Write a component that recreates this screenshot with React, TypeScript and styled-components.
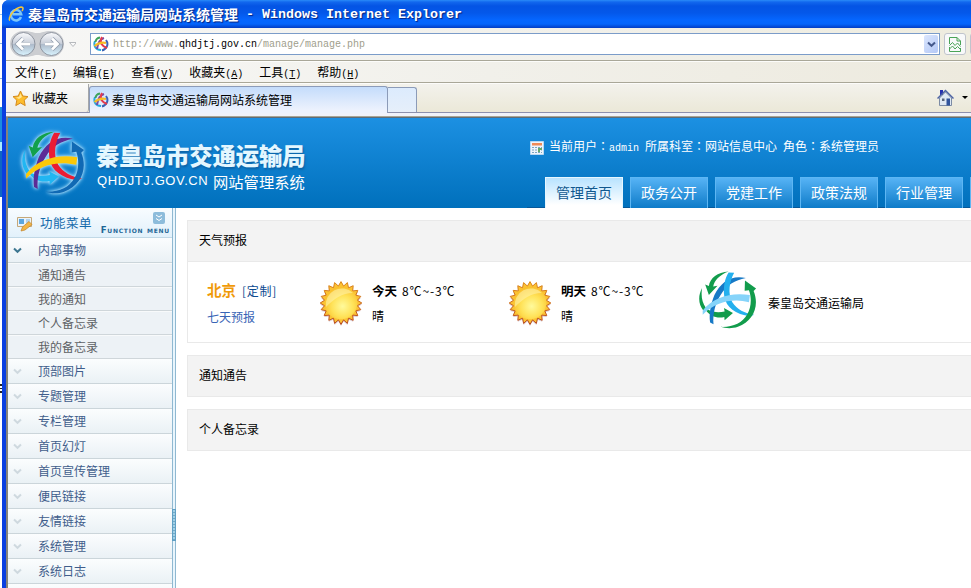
import React from "react";
import styled, { createGlobalStyle } from "styled-components";

const cjk = `"Noto Sans CJK SC", sans-serif`;
const mono = `"Liberation Mono", "Noto Sans CJK SC", monospace`;

const GlobalStyle = createGlobalStyle`
  * { box-sizing: border-box; }
  html, body { margin: 0; padding: 0; overflow: hidden; }
  body { font: 12px/16px ${cjk}; color: #000; background: #fff; }
  svg { display: block; flex: none; }
`;

const Screen = styled.div`
  display: grid;
  grid-template-columns: 2px 969px;
  width: 971px;
  height: 588px;
  overflow: hidden;
`;
const Desktop = styled.div`
  background: linear-gradient(#fff 0 14px, #9cc4e8 14px 15px, #fff 15px 43px, #8fb5dd 43px 44px, #fff 44px 78px,
    #8fb5dd 78px 79px, #fff 79px 107px, #1b8be0 107px 142px, #a8ecff 142px 151px, #0f66c4 151px 197px,
    #fff 197px 229px, #8fb5dd 229px 230px, #fff 230px 384px, #222 384px 386px, #fff 386px 388px,
    #222 388px 389px, #fff 389px 391px, #222 391px 393px, #fff 393px);
`;
const Window = styled.div`
  display: flex;
  flex-direction: column;
  height: 588px;
  background: #0a3fe0;
  border-top-left-radius: 7px;
  overflow: hidden;
`;
const TitleBar = styled.div`
  display: flex;
  align-items: center;
  flex: none;
  height: 28px;
  padding: 0 0 0 6px;
  color: #fff;
  font-weight: 700;
  text-shadow: 1px 1px 1px #06227d;
  background: linear-gradient(#2a8bf8 0, #1268ee 2px, #0454e4 6px, #0458ea 13px, #0566ff 20px, #0565fb 24px, #0347d2 27px, #033dc4 28px);
`;
const TitleCjk = styled.span`
  margin-left: 4px;
  font: 700 14px/20px ${cjk};
  width: 210px;
  white-space: nowrap;
`;
const TitleLatin = styled.span`
  font: 700 13.33px/20px "Liberation Mono", monospace;
  padding-top: 2px;
  white-space: pre;
`;
const Frame = styled.div`
  flex: 1;
  min-height: 0;
  display: flex;
  flex-direction: column;
  border-left: 4px solid #0a3fe0;
  background: #f1efe4;
`;
const AddressRow = styled.div`
  display: flex;
  flex: none;
  height: 33px;
  padding: 2px 0 0 4px;
  background: linear-gradient(90deg, #f7f7f6, #f1f0ea 60%, #eeecdf);
  border-bottom: 1px solid #a9a798;
`;
const UrlBox = styled.div`
  display: flex;
  align-items: center;
  flex: none;
  margin: 3px 0 0 14px;
  width: 850px;
  height: 22px;
  padding: 0 1px 0 2px;
  background: #fff;
  border: 1px solid #7b9cc9;
`;
const Url = styled.span`
  flex: 1;
  margin-left: 4px;
  padding-top: 1px;
  color: #a09e8c;
  font: 10px/16px ${mono};
  b { font-weight: 400; color: #000; }
`;
const DropButton = styled.span`
  display: grid;
  place-items: center;
  width: 14px;
  height: 18px;
  border-radius: 2px;
  background: linear-gradient(135deg, #dbe6fd, #b3c8f6);
`;
const ToolButton = styled.span`
  display: grid;
  place-items: center;
  flex: none;
  width: 22px;
  height: 22px;
  margin: 3px 0 0 4px;
  border: 1px solid #c0c4cc;
  border-radius: 3px;
  background: #f8f9fa;
`;
const MenuBar = styled.div`
  display: flex;
  flex: none;
  gap: 16px;
  height: 22px;
  padding: 2px 0 0 9px;
  background: linear-gradient(90deg, #f8f8f7, #f1f0ea 50%, #edeade);
  border-top: 1px solid #fcfcfa;
  border-bottom: 1px solid #a9a798;
`;
const MenuItem = styled.span`
  white-space: nowrap;
  i { font: 10px/14px ${mono}; }
`;
const TabBar = styled.div`
  display: flex;
  align-items: flex-end;
  flex: none;
  height: 30px;
  border-top: 1px solid #fcfcfa;
  border-bottom: 1px solid #8c90ad;
  background: linear-gradient(#f3f2ec, #ebe8d8);
`;
const Favorites = styled.div`
  display: flex;
  align-items: center;
  gap: 3px;
  width: 83px;
  height: 28px;
  padding: 0 0 0 6px;
  background: linear-gradient(#fbfbfa, #eeede6);
  border-right: 1px solid #a5a7a9;
  border-bottom-right-radius: 3px;
  align-self: stretch;
`;
const BrowserTab = styled.div`
  display: flex;
  align-items: center;
  gap: 3px;
  width: 299px;
  height: 27px;
  margin-bottom: -1px;
  padding: 0 0 0 3px;
  border: 1px solid #8c9bb8;
  border-bottom: 0;
  border-radius: 3px 3px 0 0;
  background: linear-gradient(#c4dcfb, #edf2fd 90%);
`;
const NewTab = styled.div`
  width: 29px;
  height: 25px;
  border: 1px solid #8c9bb8;
  border-left: 0;
  border-bottom: 0;
  border-radius: 0 3px 0 0;
  background: linear-gradient(#dcebfd, #e6effa);
`;
const HomeTools = styled.div`
  display: flex;
  align-items: center;
  gap: 8px;
  height: 28px;
  margin-left: auto;
  padding-right: 3px;
`;
const Strip = styled.div`
  flex: none;
  height: 4px;
  background: #f0f2fa;
  border-bottom: 1px solid #aaa593;
`;
const Page = styled.div`
  flex: 1;
  min-height: 0;
  display: flex;
  flex-direction: column;
  border-left: 2px solid #85837b;
  background: #fff;
  overflow: hidden;
`;
const Header = styled.header`
  display: flex;
  flex: none;
  height: 91px;
  border-top: 1px solid #5f6c78;
  background: linear-gradient(#1c90e2, #0070bc);
  color: #fff;
`;
const LogoGlow = styled.div`
  flex: none;
  margin: 13px 0 0 14px;
  width: 63px;
  height: 63px;
  filter: drop-shadow(0 0 1.5px #c9edff) drop-shadow(0 0 2px #7cc9f5);
`;
const Brand = styled.div`
  flex: none;
  width: 442px;
  padding: 23px 0 0 11px;
  white-space: nowrap;
`;
const BrandName = styled.div`
  font: 900 23.3px/28px ${cjk};
  color: #e4f7ff;
  text-shadow: 1px 2px 2px #0b64a8;
`;
const BrandSub = styled.div`
  display: flex;
  align-items: center;
  height: 24px;
  font: 15.3px/24px ${cjk};
`;
const Domain = styled.span`
  width: 117px;
  padding-left: 1px;
  font: 13px/24px "Liberation Sans", sans-serif;
  letter-spacing: 0.6px;
`;
const HeaderRight = styled.div`
  display: flex;
  flex-direction: column;
  justify-content: space-between;
  flex: none;
`;
const UserInfo = styled.div`
  display: flex;
  align-items: center;
  gap: 5px;
  margin: 20px 0 0 3px;
  white-space: pre;
  font-family: "Noto Sans CJK TC", "Noto Sans CJK SC", sans-serif;
  i { font: 10px/16px ${mono}; }
`;
const NavTabs = styled.nav`
  display: flex;
  gap: 7px;
  padding-left: 18px;
  box-shadow: inset 0 -1px #06589a;
`;
const NavTab = styled.a<{ $active?: boolean }>`
  flex: none;
  width: 78px;
  height: 31px;
  text-align: center;
  font: 14px/28px ${cjk};
  color: ${(p) => (p.$active ? "#10588f" : "#fff")};
  border: 1px solid ${(p) => (p.$active ? "#e6f6ff" : "#5db6f3")};
  border-bottom: 0;
  background: ${(p) => (p.$active ? "linear-gradient(#b8e3ff, #fff 90%)" : "linear-gradient(#56b3f5, #0e7bc8)")};
`;
const Body = styled.div`
  display: flex;
  flex: 1;
  min-height: 0;
`;
const Sidebar = styled.aside`
  flex: none;
  width: 164px;
`;
const SideHead = styled.div`
  display: flex;
  height: 30px;
  padding-left: 9px;
  background: linear-gradient(#f8fcff, #e2f1fb);
  border-bottom: 1px solid #c0d8e6;
`;
const SideTitle = styled.span`
  flex: none;
  margin: 6px 0 0 7px;
  width: 62px;
  font-size: 12.5px;
  line-height: 18px;
  letter-spacing: 0.5px;
  color: #146aab;
  white-space: nowrap;
`;
const SideCaption = styled.div`
  display: flex;
  flex-direction: column;
  align-items: flex-end;
  flex: none;
  width: 68px;
  padding-top: 4px;
`;
const Collapse = styled.span`
  display: grid;
  place-items: center;
  width: 12px;
  height: 12px;
  margin-right: 5px;
  border-radius: 2px;
  background: #8dbcdb;
`;
const CaptionText = styled.span`
  font: small-caps 700 8.6px/9px "DejaVu Sans", sans-serif;
  letter-spacing: 0.75px;
  margin-top: 2px;
  color: #1f6796;
  white-space: nowrap;
`;
const Group = styled.div`
  display: flex;
  align-items: center;
  height: 25px;
  padding-left: 5px;
  gap: 16px;
  color: #3f5d8b;
  background: linear-gradient(#fbfdfe, #eaf1f5);
  border-bottom: 1px solid #cbd5da;
`;
const SubItem = styled.div`
  height: 24px;
  padding-left: 30px;
  line-height: 21px;
  color: #5d6165;
  background: #edf2f6;
  border-top: 1px solid #f8fafb;
  border-bottom: 1px solid #cfd6da;
`;
const Splitter = styled.div`
  flex: none;
  width: 4px;
  padding-top: 301px;
  border-left: 1px solid #8fb8d1;
  border-right: 1px solid #8fb8d1;
  background: #e9f5fc;
`;
const Grip = styled.div`
  width: 4px;
  margin-left: -1px;
  height: 32px;
  border: 1px solid #5f9fc4;
  background: repeating-linear-gradient(#a2d0e6 0 2px, #73a9c5 2px 3px);
`;
const Content = styled.main`
  display: flex;
  flex-direction: column;
  gap: 12px;
  flex: 1;
  padding: 12px 0 0 11px;
`;
const Panel = styled.section`
  border: 1px solid #e9e9e9;
  border-right: 0;
`;
const PanelHead = styled.h2`
  margin: 0;
  height: 40px;
  padding-left: 11px;
  font: 12px/38px ${cjk};
  background: #f3f3f3;
`;
const Weather = styled.div`
  display: flex;
  height: 81px;
  border-top: 1px solid #e9e9e9;
  white-space: nowrap;
`;
const City = styled.div`
  width: 132px;
  padding: 15px 0 0 19px;
  line-height: 26px;
  color: #3864b5;
`;
const CityName = styled.b`
  margin-right: 6px;
  font-size: 14.5px;
  color: #f09a08;
`;
const Customize = styled.a`
  color: #0d4a90;
  letter-spacing: 0.7px;
`;
const Forecast = styled.div`
  display: flex;
  width: 189px;
`;
const Day = styled.div`
  padding: 16px 0 0 10px;
  line-height: 25px;
  b { font-size: 12.5px; margin-right: 5px; }
`;
const Temperature = styled.span`
  letter-spacing: 0.85px;
`;
const SunSlot = styled.div`
  padding-top: 19px;
`;
const Org = styled.div`
  display: flex;
  gap: 11px;
  padding: 9px 0 0 1px;
  line-height: 63px;
`;
const HeadIcon = styled.span`
  flex: none;
  padding-top: 8px;
`;

type Palette = { a: string; b: string; c: string; d: string; e: string; f: string };
const brandColors: Palette = { a: "#12a04c", b: "#5c2b96", c: "#ea1c34", d: "#fcc808", e: "#21b6f2", f: "#1069b4" };
const orgColors: Palette = { a: "#129c4c", b: "#1779c6", c: "#24b0ee", d: "#86d4fa", e: "#129c4c", f: "#129c4c" };

const Emblem = ({ size, colors }: { size: number; colors: Palette }) => (
  <svg width={size} height={size} viewBox="22 27 188 188">
    <path fill={colors.e} d="M32 82C18 108 20 134 36 155L44 146C32 128 28 108 32 82ZM50 152C70 162 88 162 105 158L103 147L132 163L105 187L104 176C80 182 56 172 45 155Z" />
    <path fill={colors.b} d="M174 50C130 38 92 62 72 105C60 136 54 165 58 194L69 200C66 165 75 132 92 105C112 72 138 58 174 50Z" />
    <path fill={colors.c} d="M118 32L136 33C121 60 114 100 130 128C145 152 170 163 201 169L188 174C140 168 110 145 104 110C100 80 106 50 118 32Z" />
    <path fill={colors.d} d="M34 155C70 111 125 96 187 105L184 128C130 115 75 127 34 169Z" />
    <path fill={colors.a} d="M118 29C82 31 58 50 54 76L42 71L54 105L82 75L68 77C72 58 88 40 118 29Z" />
    <path fill={colors.f} d="M171 58L207 84L199 92C219 140 198 190 148 208C128 215 107 213 92 208C130 210 163 196 178 168C192 145 193 114 184 89L170 91Z" />
  </svg>
);

const SmallEmblem = () => (
  <svg width="16" height="16" viewBox="0 0 16 16" fill="none" strokeWidth="2">
    <path stroke="#27a9df" d="M2 5C0 10 3 14 8 14" />
    <path stroke="#3fa35b" d="M7 1.5Q3 2 2.5 6" />
    <path stroke="#3b63b5" d="M13 4C16 8 14 13 9 14.5" />
    <path stroke="#7a4aa4" d="M11 2Q5 4 4 13" />
    <path stroke="#e43a4c" d="M9 1C6 7 9 10 14 12" />
    <path stroke="#f6bb24" d="M1.5 10Q7 5.500 13 7" />
  </svg>
);

const spikes = Array.from({ length: 40 }, (_, i) => {
  const r = i % 2 ? 16.6 : 20.8;
  const t = (i * Math.PI) / 20 - Math.PI / 2;
  return `${(21 + r * Math.cos(t)).toFixed(1)},${(22 + r * 1.03 * Math.sin(t)).toFixed(1)}`;
}).join(" ");

const Sun = () => (
  <svg width="42" height="46" viewBox="0 0 42 46">
    <defs>
      <radialGradient id="disc" cx="0.55" cy="0.6" r="0.6">
        <stop offset="0" stopColor="#fffa9c" />
        <stop offset="0.55" stopColor="#ffe258" />
        <stop offset="1" stopColor="#f9bf2a" />
      </radialGradient>
      <linearGradient id="ray" x1="0" y1="0" x2="0" y2="1">
        <stop offset="0" stopColor="#dd8a1c" />
        <stop offset="1" stopColor="#b8481c" />
      </linearGradient>
    </defs>
    <polygon points={spikes} fill="#b08a98" opacity="0.45" transform="translate(0 1.5)" />
    <polygon points={spikes} fill="#fbc233" stroke="url(#ray)" strokeWidth="1" />
    <circle cx="21" cy="22" r="16.300" fill="url(#disc)" />
    <path d="M6 26A16 16 0 0 1 33 12C22 12 14 18 6 26Z" fill="#fff2a8" opacity="0.6" />
  </svg>
);

const IeIcon = () => (
  <svg width="16" height="16" viewBox="0 0 16 16" fill="none">
    <path d="M13 11A5.200 5.200 0 1 1 13.200 8.200H4.500" stroke="#7cc6fa" strokeWidth="2.500" />
    <path d="M2 14.500C-1 13 6 2 13 1C16 1 15 3.500 14 5" stroke="#f2c53a" strokeWidth="1.500" />
  </svg>
);

const NavButtons = () => (
  <svg width="66" height="30" viewBox="0 0 66 30">
    <defs>
      <linearGradient id="orb" x1="0" y1="0" x2="0" y2="1">
        <stop offset="0" stopColor="#fafbfd" />
        <stop offset="0.5" stopColor="#c7cdd8" />
        <stop offset="0.52" stopColor="#aebbcb" />
        <stop offset="1" stopColor="#d9f4ff" />
      </linearGradient>
    </defs>
    <path d="M13 1C22 1 22 3 27.500 3S33 1 41 1A13 13 0 0 1 41 27C33 27 32 25 27.500 25S22 27 13 27A13 13 0 0 1 13 1Z" fill="#cbcdd1" />
    <circle cx="13.500" cy="14" r="11.500" fill="url(#orb)" stroke="#8e949f" />
    <circle cx="41.500" cy="14" r="11.500" fill="url(#orb)" stroke="#8e949f" />
    <path d="M20 14H8M13 8.500L7.500 14L13 19.500M35 14H47M42 8.500L47.500 14L42 19.500" fill="none" stroke="#8e9aaa" strokeWidth="4.200" />
    <path d="M20 14H8M13 8.500L7.500 14L13 19.500M35 14H47M42 8.500L47.500 14L42 19.500" fill="none" stroke="#fff" strokeWidth="2.800" />
    <path d="M59.500 12.500H66.500L63 16.500Z" fill="#fafafa" stroke="#b6b9bd" />
  </svg>
);

const Chevron = ({ color }: { color: string }) => (
  <svg width="9" height="7" viewBox="0 0 9 7" fill="none" stroke={color} strokeWidth="2">
    <path d="M1 1.500L4.500 4.800L8 1.500" />
  </svg>
);

const Star = () => (
  <svg width="17" height="17" viewBox="0 0 17 17">
    <path d="M8.500 1L10.800 6L16 6.600L12.200 10.200L13.200 15.600L8.500 13L3.800 15.600L4.800 10.200L1 6.600L6.200 6Z" fill="#fdbd2c" stroke="#d48a1c" />
    <path d="M8.500 3.500L10 7L7 9L4 7.500L7 7Z" fill="#ffe795" />
  </svg>
);

const House = () => (
  <svg width="17" height="18" viewBox="0 0 17 18">
    <path d="M3 1H6V6H3Z" fill="#2631b0" />
    <path d="M2.500 9L8.500 3L14.500 9V16.500H2.500Z" fill="#dfe8f3" stroke="#7c8ba4" />
    <path d="M0.500 9.500L8.500 1.500L16.500 9.500" fill="none" stroke="#4c62a4" strokeWidth="1.500" />
    <path d="M9.500 9.500H13V16.500H9.500Z" fill="#31549c" />
    <path d="M5 9.500H7.500V12H5Z" fill="#59657a" />
  </svg>
);

const BrokenPage = () => (
  <svg width="12" height="15" viewBox="0 0 12 15" fill="none" stroke="#4aa457">
    <path d="M0.500 7V0.500H8L11.500 4V8M8 0.500V4H11.500M0.500 10V14.500H11.500V11" />
    <path d="M0.500 8.500L3.500 5.500L6 8.500L8.500 6L11.500 9.500M0.500 12L3.500 9L6 12L8.500 9.500L11.500 12.500" />
  </svg>
);

const CalendarIcon = () => (
  <svg width="14" height="14" viewBox="0 0 14 14">
    <path d="M0.500 0.500H13.500V13.500H0.500Z" fill="#eef4fb" stroke="#b8d8f2" />
    <path d="M2 2H12V4.500H2Z" fill="#f08a56" />
    <path d="M2 6.500H12M2 9H12M2 11.500H12" stroke="#7aa5c4" strokeDasharray="2 1" />
    <path d="M8 7H12V9H10V11H8Z" fill="#67a867" />
  </svg>
);

const NoteIcon = () => (
  <svg width="16" height="16" viewBox="0 0 16 16">
    <path d="M0.500 1.500H14.500V10.500H0.500Z" fill="#e9f3fb" stroke="#c5a878" />
    <path d="M2 3H7V8H2Z" fill="#5aa6df" />
    <path d="M9 4H13M9 6H13" stroke="#7fb2dc" />
    <path d="M4 15L5.500 11L12 5.500L15 8.500L8 14Z" fill="#f3b544" stroke="#c18429" strokeWidth="0.700" />
  </svg>
);

const menus: [string, string][] = [["文件", "F"], ["编辑", "E"], ["查看", "V"], ["收藏夹", "A"], ["工具", "T"], ["帮助", "H"]];
const navItems = ["管理首页", "政务公开", "党建工作", "政策法规", "行业管理", ""];
const subItems = ["通知通告", "我的通知", "个人备忘录", "我的备忘录"];
const groups = ["顶部图片", "专题管理", "专栏管理", "首页幻灯", "首页宣传管理", "便民链接", "友情链接", "系统管理", "系统日志", ""];

export default function App() {
  return (
    <Screen>
      <GlobalStyle />
      <Desktop />
      <Window>
        <TitleBar>
          <IeIcon />
          <TitleCjk>秦皇岛市交通运输局网站系统管理</TitleCjk>
          <TitleLatin> - Windows Internet Explorer</TitleLatin>
        </TitleBar>
        <Frame>
          <AddressRow>
            <NavButtons />
            <UrlBox>
              <SmallEmblem />
              <Url>http://www.<b>qhdjtj.gov.cn</b>/manage/manage.php</Url>
              <DropButton><Chevron color="#44598c" /></DropButton>
            </UrlBox>
            <ToolButton><BrokenPage /></ToolButton>
            <ToolButton />
          </AddressRow>
          <MenuBar>
            {menus.map(([label, key]) => (
              <MenuItem key={key}>{label}<i>(<u>{key}</u>)</i></MenuItem>
            ))}
          </MenuBar>
          <TabBar>
            <Favorites><Star />收藏夹</Favorites>
            <BrowserTab><SmallEmblem />秦皇岛市交通运输局网站系统管理</BrowserTab>
            <NewTab />
            <HomeTools>
              <House />
              <svg width="6" height="4" viewBox="0 0 6 4"><path d="M0 0H6L3 3Z" /></svg>
            </HomeTools>
          </TabBar>
          <Strip />
          <Page>
            <Header>
              <LogoGlow><Emblem size={63} colors={brandColors} /></LogoGlow>
              <Brand>
                <BrandName>秦皇岛市交通运输局</BrandName>
                <BrandSub><Domain>QHDJTJ.GOV.CN</Domain>网站管理系统</BrandSub>
              </Brand>
              <HeaderRight>
                <UserInfo>
                  <CalendarIcon />
                  <span>当前用户：<i>admin </i>所属科室：网站信息中心<i> </i>角色：系统管理员</span>
                </UserInfo>
                <NavTabs>
                  {navItems.map((label, i) => <NavTab key={i} $active={i === 0}>{label}</NavTab>)}
                </NavTabs>
              </HeaderRight>
            </Header>
            <Body>
              <Sidebar>
                <SideHead>
                  <HeadIcon><NoteIcon /></HeadIcon>
                  <SideTitle>功能菜单</SideTitle>
                  <SideCaption>
                    <Collapse>
                      <svg width="8" height="8" viewBox="0 0 8 8" fill="none" stroke="#fff"><path d="M1 1L4 3L7 1M1 4.500L4 6.500L7 4.500" /></svg>
                    </Collapse>
                    <CaptionText>Function menu</CaptionText>
                  </SideCaption>
                </SideHead>
                <Group><Chevron color="#3d7690" />内部事物</Group>
                {subItems.map((label) => <SubItem key={label}>{label}</SubItem>)}
                {groups.map((label) => <Group key={label}><Chevron color="#cfd9df" />{label}</Group>)}
              </Sidebar>
              <Splitter><Grip /></Splitter>
              <Content>
                <Panel>
                  <PanelHead>天气预报</PanelHead>
                  <Weather>
                    <City>
                      <div><CityName>北京</CityName><Customize>[定制]</Customize></div>
                      <div>七天预报</div>
                    </City>
                    {["今天", "明天"].map((day) => (
                      <Forecast key={day}>
                        <SunSlot><Sun /></SunSlot>
                        <Day>
                          <div><b>{day}</b><Temperature>8℃~-3℃</Temperature></div>
                          <div>晴</div>
                        </Day>
                      </Forecast>
                    ))}
                    <Org><Emblem size={58} colors={orgColors} />秦皇岛交通运输局</Org>
                  </Weather>
                </Panel>
                <Panel><PanelHead>通知通告</PanelHead></Panel>
                <Panel><PanelHead>个人备忘录</PanelHead></Panel>
              </Content>
            </Body>
          </Page>
        </Frame>
      </Window>
    </Screen>
  );
}
